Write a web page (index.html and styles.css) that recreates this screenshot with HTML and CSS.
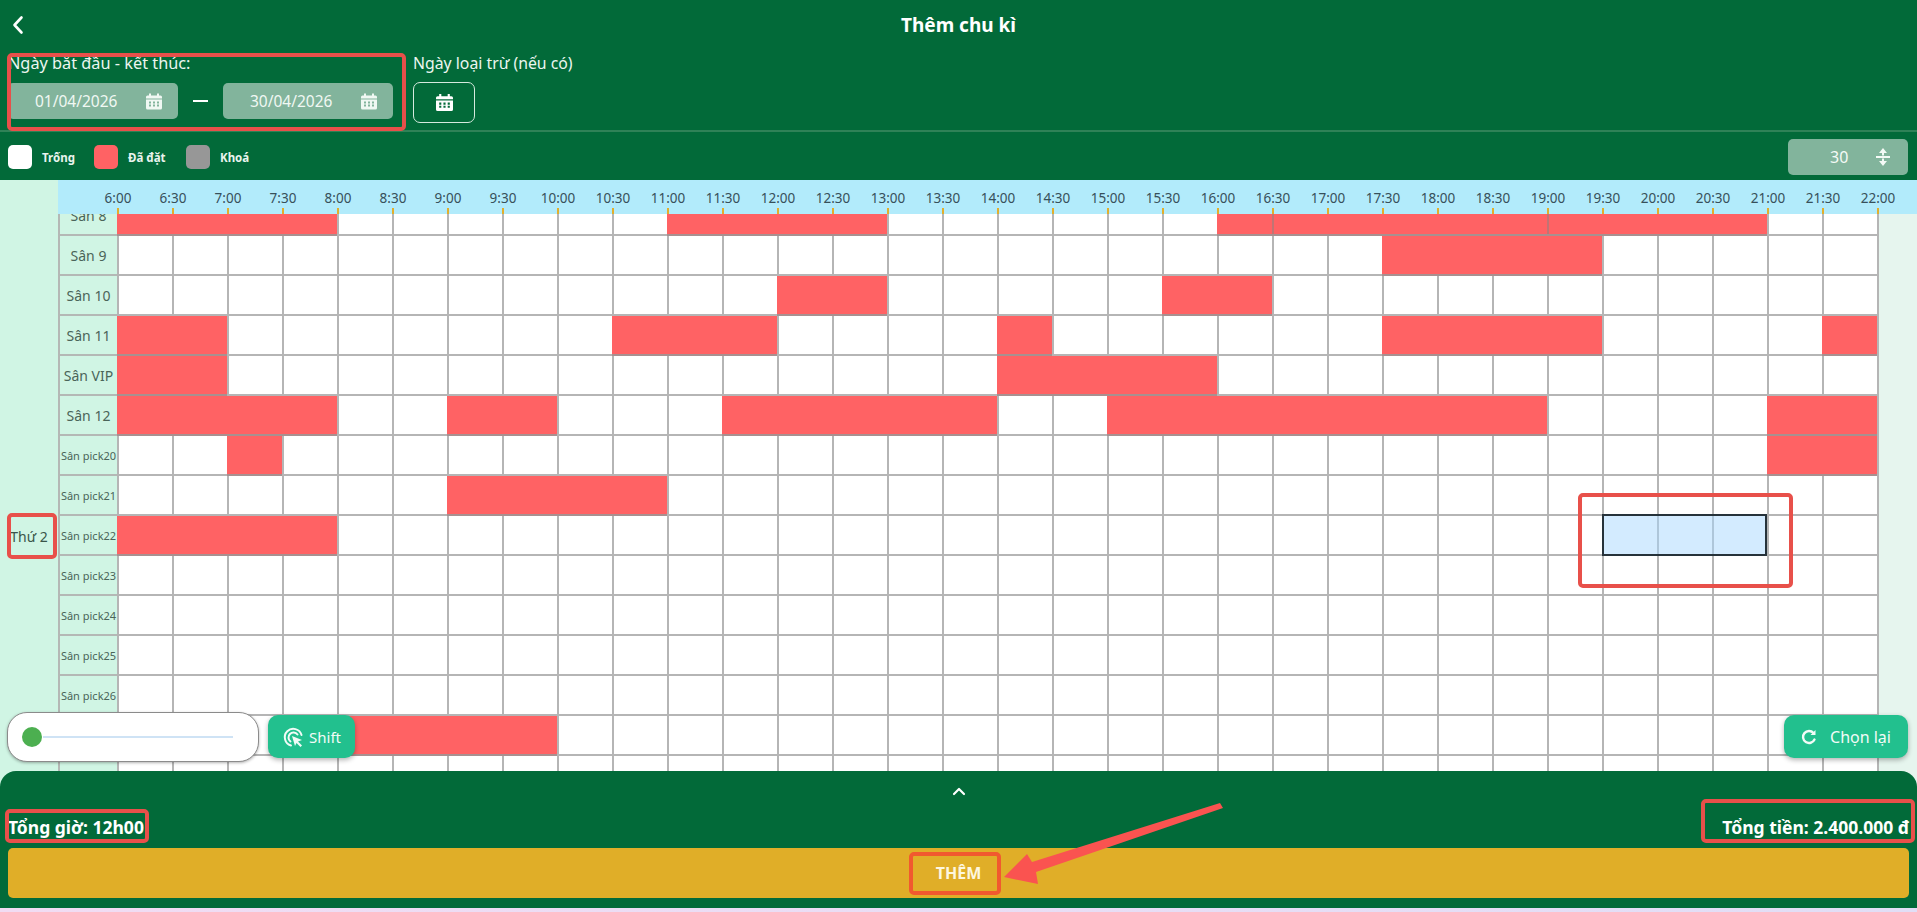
FILE: index.html

```html
<!DOCTYPE html>
<html lang="vi">
<head>
  <meta charset="UTF-8" />
  <meta name="viewport" content="width=device-width, initial-scale=1.0" />
  <title>Thêm chu kì</title>
  <link rel="stylesheet" href="styles.css">
</head>
<body>
<svg class="icon-defs" width="0" height="0">
  <symbol id="cal" viewBox="0 0 16 16">
    <path fill="currentColor" fill-rule="evenodd" d="M3 0h2v2h6V0h2v2h1.5A1.5 1.5 0 0 1 16 3.500V5H0V3.500A1.500 1.500 0 0 1 1.500 2H3zM0 6h16v8.500a1.500 1.500 0 0 1-1.500 1.500h-13A1.500 1.500 0 0 1 0 14.500zM3 8v2h2V8zm4 0v2h2V8zm4 0v2h2V8zm-8 3v2h2v-2zm4 0v2h2v-2zm4 0v2h2v-2z"/>
  </symbol>
</svg>

<div class="page">
  <header class="topbar">
    <div class="title-row">
      <svg class="back" width="12" height="20" viewBox="0 0 12 20"><path d="M9.500 2.500 2.500 10l7 7.500" fill="none" stroke="currentColor" stroke-width="2.600" stroke-linecap="round" stroke-linejoin="round"/></svg>
      <h1>Thêm chu kì</h1>
    </div>
    <div class="date-row">
      <div class="date-group">
        <label>Ngày bắt đầu - kết thúc:</label>
        <div class="date-inputs">
          <div class="date-input"><span>01/04/2026</span><svg width="16" height="17"><use href="#cal"/></svg></div>
          <i class="dash"></i>
          <div class="date-input"><span>30/04/2026</span><svg width="16" height="17"><use href="#cal"/></svg></div>
        </div>
      </div>
      <div class="exclude-group">
        <label class="exclude-label">Ngày loại trừ (nếu có)</label>
        <button class="exclude-btn"><svg width="17" height="19"><use href="#cal"/></svg></button>
      </div>
    </div>
    <div class="legend-row">
      <div class="legend">
        <span class="swatch swatch-free"></span><b class="legend-free">Trống</b>
        <span class="swatch swatch-booked"></span><b class="legend-booked">Đã đặt</b>
        <span class="swatch swatch-locked"></span><b>Khoá</b>
      </div>
      <div class="step-select">
        <span>30</span>
        <svg width="14" height="18" viewBox="0 0 14 18"><path fill="currentColor" d="M7 0l4 5H8v2.500H6V5H3zM7 18l-4-5h3v-2.500h2V13h3zM0 8h14v2H0z"/></svg>
      </div>
    </div>
  </header>

  <main class="board">
    <div class="times">
      <span>6:00</span><span>6:30</span><span>7:00</span><span>7:30</span><span>8:00</span><span>8:30</span><span>9:00</span><span>9:30</span><span>10:00</span><span>10:30</span><span>11:00</span>
      <span>11:30</span><span>12:00</span><span>12:30</span><span>13:00</span><span>13:30</span><span>14:00</span><span>14:30</span><span>15:00</span><span>15:30</span><span>16:00</span><span>16:30</span>
      <span>17:00</span><span>17:30</span><span>18:00</span><span>18:30</span><span>19:00</span><span>19:30</span><span>20:00</span><span>20:30</span><span>21:00</span><span>21:30</span><span>22:00</span>
    </div>
    <div class="schedule">
      <div class="day">Thứ 2</div>
      <div class="rows">
        <div class="row"><div class="court">Sân 8</div><div class="slots">
          <i class="booked" style="grid-column:1/5"></i><i class="booked" style="grid-column:11/15"></i><i class="booked" style="grid-column:21/22"></i><i class="booked joined" style="grid-column:22/27"></i><i class="booked joined" style="grid-column:27/31"></i>
        </div></div>
        <div class="row"><div class="court">Sân 9</div><div class="slots">
          <i class="booked" style="grid-column:24/28"></i>
        </div></div>
        <div class="row"><div class="court">Sân 10</div><div class="slots">
          <i class="booked" style="grid-column:13/15"></i><i class="booked" style="grid-column:20/22"></i>
        </div></div>
        <div class="row"><div class="court">Sân 11</div><div class="slots">
          <i class="booked" style="grid-column:1/3"></i><i class="booked" style="grid-column:10/13"></i><i class="booked" style="grid-column:17/18"></i><i class="booked" style="grid-column:24/28"></i><i class="booked" style="grid-column:32/33"></i>
        </div></div>
        <div class="row"><div class="court">Sân VIP</div><div class="slots">
          <i class="booked" style="grid-column:1/3"></i><i class="booked" style="grid-column:17/21"></i>
        </div></div>
        <div class="row"><div class="court">Sân 12</div><div class="slots">
          <i class="booked" style="grid-column:1/5"></i><i class="booked" style="grid-column:7/9"></i><i class="booked" style="grid-column:12/17"></i><i class="booked" style="grid-column:19/27"></i><i class="booked" style="grid-column:31/33"></i>
        </div></div>
        <div class="row"><div class="court court-sm">Sân pick20</div><div class="slots">
          <i class="booked" style="grid-column:3/4"></i><i class="booked" style="grid-column:31/33"></i>
        </div></div>
        <div class="row"><div class="court court-sm">Sân pick21</div><div class="slots">
          <i class="booked" style="grid-column:7/11"></i>
        </div></div>
        <div class="row"><div class="court court-sm">Sân pick22</div><div class="slots">
          <i class="booked" style="grid-column:1/5"></i><i class="picked" style="grid-column:28/31"></i>
        </div></div>
        <div class="row"><div class="court court-sm">Sân pick23</div><div class="slots"></div></div>
        <div class="row"><div class="court court-sm">Sân pick24</div><div class="slots"></div></div>
        <div class="row"><div class="court court-sm">Sân pick25</div><div class="slots"></div></div>
        <div class="row"><div class="court court-sm">Sân pick26</div><div class="slots"></div></div>
        <div class="row"><div class="court court-sm">Sân pick27</div><div class="slots">
          <i class="booked" style="grid-column:5/9"></i>
        </div></div>
        <div class="row"><div class="court court-sm">Sân pick28</div><div class="slots"></div></div>
      </div>
    </div>

    <div class="zoom-slider"><i class="thumb"></i><i class="track"></i></div>
    <button class="float-btn shift-btn">
      <svg width="22" height="22" viewBox="0 0 22 22" fill="none" stroke="currentColor" stroke-width="2" stroke-linecap="round">
        <path d="M9 19.500A8.500 8.500 0 1 1 19.500 9"/>
        <path d="M8.500 15.500A5 5 0 1 1 15.500 8.500"/>
        <path d="M10 10l10 4-4 1.500 4 4-1.500 1.500-4-4L13 20z" fill="currentColor" stroke="none"/>
      </svg>
      Shift
    </button>
    <button class="float-btn reset-btn">
      <svg width="16" height="16" viewBox="0 0 16 16" fill="none" stroke="currentColor" stroke-width="2.400" stroke-linecap="round">
        <path d="M13.500 10.500A6 6 0 1 1 12.500 4"/>
        <path d="M14.500 1v5h-5z" fill="currentColor" stroke="none"/>
      </svg>
      Chọn lại
    </button>
  </main>

  <footer class="summary">
    <div class="summary-toggle">
      <svg width="14" height="9" viewBox="0 0 14 9"><path d="M2 7l5-5 5 5" fill="none" stroke="currentColor" stroke-width="2.200" stroke-linecap="round" stroke-linejoin="round"/></svg>
    </div>
    <div class="totals">
      <span>Tổng giờ: 12h00</span>
      <span>Tổng tiền: 2.400.000 đ</span>
    </div>
    <button class="add-btn">THÊM</button>
  </footer>
</div>

<!-- red annotation marks drawn over the screenshot -->
<i class="mark mark-dates"></i>
<i class="mark mark-day"></i>
<i class="mark mark-pick"></i>
<i class="mark mark-hours"></i>
<i class="mark mark-money"></i>
<i class="mark mark-add"></i>
<svg class="mark-arrow" width="1917" height="912" viewBox="0 0 1917 912">
  <path fill="#fa5350" d="M1004 877 1027 854 1032 862 1220 803 1223 808 1036 872 1038 884z"/>
</svg>
</body>
</html>
```

FILE: styles.css

```css
* {
  box-sizing: border-box;
}
html, body {
  margin: 0;
  height: 100%;
  overflow: hidden;
}
body {
  font-family: "Noto Sans", sans-serif;
  color: #fff;
  background: linear-gradient(to right, #f1dcf3, #e1def6);
}
.icon-defs {
  position: absolute;
}
.page {
  height: 908px;
  display: flex;
  flex-direction: column;
  overflow: hidden;
}

/* top bar */
.topbar {
  height: 180px;
  flex: none;
  background: #026a39;
}
.title-row {
  height: 52px;
  display: flex;
  align-items: center;
  justify-content: center;
  position: relative;
}
.title-row h1 {
  margin: -2px 0 0;
  font-size: 19px;
  font-weight: 700;
}
.back {
  position: absolute;
  left: 12px;
  top: 15px;
}
.date-row {
  height: 80px;
  padding-left: 8px;
  display: flex;
  gap: 20px;
  border-bottom: 2px solid #2f8257;
}
.date-row label {
  display: block;
  font-size: 16.300px;
  line-height: 22px;
  color: #ecf6f0;
}
.date-row .exclude-label {
  font-size: 15.800px;
}
.date-group {
  width: 385px;
}
.date-inputs {
  margin-top: 9px;
  display: flex;
  align-items: center;
  gap: 15px;
}
.date-input {
  width: 170px;
  height: 36px;
  background: #82b49c;
  border-radius: 5px;
  display: flex;
  align-items: center;
  padding: 0 16px 0 27px;
  justify-content: space-between;
  font-size: 15.500px;
  color: #f0f8f3;
}
.dash {
  width: 15px;
  height: 2px;
  background: #fff;
}
.exclude-btn {
  display: flex;
  align-items: center;
  justify-content: center;
  margin-top: 8px;
  width: 62px;
  height: 41px;
  padding: 0;
  background: transparent;
  color: #fff;
  border: 1px solid #d6eadf;
  border-radius: 7px;
}
.legend-row {
  height: 48px;
  padding: 7px 9px 5px 8px;
  display: flex;
  justify-content: space-between;
  align-items: center;
}
.legend {
  display: flex;
  align-items: center;
}
.legend b {
  font-size: 11.500px;
  margin-left: 10px;
  color: #e9f4ee;
}
.legend-free {
  width: 52px;
}
.legend-booked {
  width: 58px;
}
.swatch {
  width: 24px;
  height: 24px;
  border-radius: 5px;
}
.swatch-free {
  background: #fff;
}
.swatch-booked {
  background: #ff6264;
}
.swatch-locked {
  background: #979797;
}
.step-select {
  width: 120px;
  height: 36px;
  background: #82b49c;
  border-radius: 5px;
  display: flex;
  align-items: center;
  padding: 0 18px 0 42px;
  justify-content: space-between;
  font-size: 16px;
  color: #f4faf6;
}

/* schedule */
.board {
  flex: 1;
  min-height: 0;
  position: relative;
  overflow: hidden;
  background: #e6f5ee;
}
.times {
  position: relative;
  z-index: 1;
  height: 34px;
  margin-left: 58px;
  padding-left: 32.500px;
  display: flex;
  background: #b2ebfb;
  box-shadow: -58px 0 0 #d0f5e4;
}
.times span {
  position: relative;
  width: 55px;
  flex: none;
  text-align: center;
  font-size: 13.500px;
  line-height: 36px;
  color: #37505a;
}
.times span::after {
  content: "";
  position: absolute;
  left: 26.500px;
  bottom: 0;
  width: 2px;
  height: 6px;
  background: #e3ae2b;
}
.schedule {
  display: flex;
  margin-top: -18px;
}
.day {
  width: 58px;
  flex: none;
  display: flex;
  align-items: center;
  justify-content: center;
  padding-top: 80px;
  background: #d0f5e4;
  font-size: 14px;
  color: #3a5549;
}
.row {
  height: 40px;
  display: flex;
}
.court {
  width: 59px;
  flex: none;
  display: flex;
  align-items: center;
  justify-content: center;
  white-space: nowrap;
  background: #d0f5e4;
  border-left: 2px solid #b4b8b5;
  border-bottom: 2px solid #b4b8b5;
  font-size: 14px;
  color: #4a6458;
}
.court-sm {
  font-size: 11px;
}
.slots {
  width: 1762px;
  flex: none;
  display: grid;
  grid-template-columns: repeat(32, 55px);
  grid-auto-rows: 40px;
  background:
    linear-gradient(#b5b5b5, #b5b5b5) left bottom / 1760px 2px no-repeat,
    repeating-linear-gradient(to right, #b5b5b5 0 2px, #fff 2px 55px) left top / 1762px 100% no-repeat;
}
.slots i {
  grid-row: 1;
  margin-bottom: 2px;
}
.booked {
  background: #ff6264;
  box-shadow: 0 2px 0 #a89090;
}
.joined {
  border-left: 2px solid #c07474;
}
.slots .picked {
  margin-top: -2px;
  margin-bottom: 0;
  background: rgba(168, 215, 255, 0.5);
  border: 2px solid #26323a;
}

/* floating tools over the grid */
.zoom-slider {
  position: absolute;
  left: 7px;
  top: 532px;
  width: 252px;
  height: 50px;
  background: #fff;
  border: 1px solid #8b8b8b;
  border-radius: 20px;
  box-shadow: 0 1px 3px rgba(0, 0, 0, 0.3);
}
.thumb {
  position: absolute;
  left: 14px;
  top: 14px;
  width: 20px;
  height: 20px;
  border-radius: 50%;
  background: #4caf50;
}
.track {
  position: absolute;
  left: 35px;
  top: 23px;
  width: 190px;
  height: 2px;
  background: #cfe3f5;
}
.float-btn {
  position: absolute;
  top: 535px;
  height: 43px;
  display: flex;
  align-items: center;
  justify-content: center;
  border: none;
  border-radius: 10px;
  background: #22c08e;
  color: #f2fbf7;
  font-family: inherit;
  font-size: 16px;
  box-shadow: 0 2px 5px rgba(0, 0, 0, 0.3);
}
.shift-btn {
  left: 268px;
  width: 87px;
  gap: 5px;
  font-size: 15px;
}
.reset-btn {
  left: 1784px;
  width: 124px;
  gap: 13px;
}

/* bottom panel */
.summary {
  flex: none;
  height: 137px;
  margin-top: -16px;
  position: relative;
  z-index: 2;
  background: #026a39;
  border-radius: 16px 16px 0 0;
  padding: 0 8px;
}
.summary-toggle {
  height: 38px;
  padding-top: 16px;
  display: flex;
  justify-content: center;
}
.totals {
  height: 36px;
  margin-bottom: 3px;
  display: flex;
  justify-content: space-between;
  align-items: center;
  font-size: 17.500px;
  font-weight: 700;
}
.add-btn {
  display: block;
  width: 100%;
  height: 50px;
  border: none;
  border-radius: 5px;
  background: #e0ae28;
  color: #fdf6df;
  font-family: inherit;
  font-size: 16px;
  font-weight: 700;
}

/* annotations */
.mark {
  position: absolute;
  z-index: 3;
  border: 4px solid #e8504a;
  border-radius: 5px;
}
.mark-dates {
  left: 7px;
  top: 53px;
  width: 399px;
  height: 78px;
}
.mark-day {
  left: 7px;
  top: 513px;
  width: 50px;
  height: 46px;
}
.mark-pick {
  left: 1578px;
  top: 493px;
  width: 215px;
  height: 95px;
}
.mark-hours {
  left: 5px;
  top: 809px;
  width: 144px;
  height: 34px;
}
.mark-money {
  left: 1701px;
  top: 799px;
  width: 214px;
  height: 44px;
}
.mark-add {
  left: 909px;
  top: 852px;
  width: 92px;
  height: 43px;
  border-color: #f1592f;
}
.mark-arrow {
  position: absolute;
  left: 0;
  top: 0;
  z-index: 3;
  pointer-events: none;
}
```
